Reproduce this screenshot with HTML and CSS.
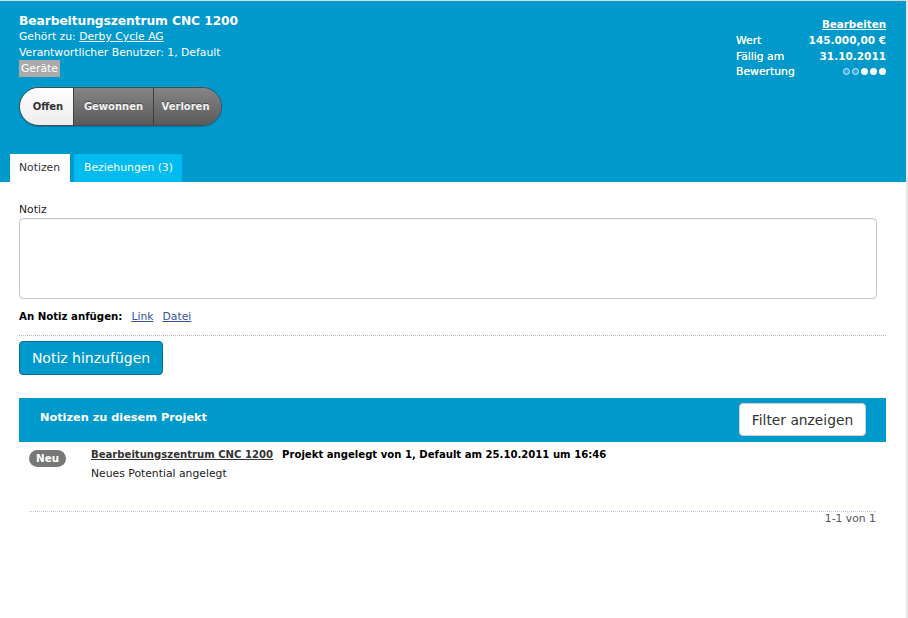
FILE: index.html
```html
<!DOCTYPE html>
<html lang="de">
<head>
<meta charset="utf-8">
<title>Bearbeitungszentrum CNC 1200</title>
<link rel="stylesheet" href="styles.css">
</head>
<body>
<div class="page">
  <header class="head">
    <div class="head-top">
      <div class="head-left">
        <h1 class="title">Bearbeitungszentrum CNC 1200</h1>
        <div class="line">Gehört zu: <a href="#" class="wlink">Derby Cycle AG</a></div>
        <div class="line">Verantwortlicher Benutzer: 1, Default</div>
        <span class="tag">Geräte</span>
        <div class="seg">
          <span class="seg-item active">Offen</span>
          <span class="seg-item">Gewonnen</span>
          <span class="seg-item">Verloren</span>
        </div>
      </div>
      <div class="head-right">
        <a href="#" class="wlink edit">Bearbeiten</a>
        <div class="kv"><span class="k">Wert</span><span class="v">145.000,00 €</span></div>
        <div class="kv"><span class="k">Fällig am</span><span class="v">31.10.2011</span></div>
        <div class="kv"><span class="k">Bewertung</span>
          <span class="dots"><i class="dot empty"></i><i class="dot empty"></i><i class="dot"></i><i class="dot"></i><i class="dot"></i></span>
        </div>
      </div>
    </div>
    <nav class="tabs">
      <span class="tab active">Notizen</span>
      <span class="tab">Beziehungen (3)</span>
    </nav>
  </header>
  <main class="content">
    <label class="lbl">Notiz</label>
    <div class="textarea"></div>
    <div class="attach"><b>An Notiz anfügen:</b><a href="#">Link</a><a href="#">Datei</a></div>
    <div class="sep"></div>
    <button class="btn-primary">Notiz hinzufügen</button>
    <section class="notes">
      <div class="notes-bar">
        <span class="notes-title">Notizen zu diesem Projekt</span>
        <button class="btn-filter">Filter anzeigen</button>
      </div>
      <div class="note">
        <span class="badge">Neu</span>
        <div class="note-body">
          <div class="note-head"><a href="#">Bearbeitungszentrum CNC 1200</a><b>Projekt angelegt von 1, Default am 25.10.2011 um 16:46</b></div>
          <div class="note-text">Neues Potential angelegt</div>
        </div>
      </div>
      <div class="pager">1-1 von 1</div>
    </section>
  </main>
</div>
</body>
</html>
```
FILE: styles.css
```css
* { box-sizing: border-box; }
html, body { margin: 0; padding: 0; background: #fff; }
body {
  font-family: "DejaVu Sans", Verdana, sans-serif;
  font-size: 10.8px;
  color: #222;
}
.page {
  width: 908px;
  min-height: 618px;
  border-top: 1px solid #dcdcdc;
  border-right: 2px solid #e6e6e6;
}
.head {
  background: #0099cc;
  color: #fff;
  height: 181px;
  display: flex;
  flex-direction: column;
  justify-content: space-between;
}
.head-top {
  display: flex;
  justify-content: space-between;
  padding: 13px 20px 0 19px;
}
.title {
  margin: 0;
  font-size: 12.3px;
  font-weight: bold;
  line-height: 15px;
  letter-spacing: -0.1px;
}
.line {
  font-size: 10.8px;
  line-height: 16px;
}
.wlink { color: #fff; }
.tag {
  display: inline-block;
  background: #aaaaaa;
  color: #fff;
  font-size: 10.8px;
  line-height: 17px;
  padding: 0 2px 0 2px;
  margin-top: -1px;
  vertical-align: top;
}
.seg {
  display: flex;
  width: 203px;
  height: 39px;
  margin-top: 10px;
  border-radius: 20px;
  overflow: hidden;
  border: 1px solid #4a4a4a;
  box-shadow: 0 1px 1px rgba(0,0,0,0.2);
}
.seg-item {
  display: flex;
  align-items: center;
  justify-content: center;
  font-size: 10px;
  font-weight: bold;
  color: #f2f2f2;
  background: linear-gradient(#858585, #5a5a5a);
  text-shadow: 0 -1px 0 rgba(0,0,0,0.4);
  border-left: 1px solid #3f3f3f;
}
.seg-item:nth-child(1) { width: 53px; border-left: 0; }
.seg-item:nth-child(2) { width: 80px; }
.seg-item:nth-child(3) { flex: 1; padding-right: 4px; }
.seg-item.active {
  background: linear-gradient(#ffffff, #ececec);
  color: #333;
  text-shadow: none;
  padding-left: 3px;
}
.head-right {
  width: 150px;
  padding-top: 2px;
  display: flex;
  flex-direction: column;
  font-size: 10.8px;
}
.edit {
  align-self: flex-end;
  font-weight: bold;
  font-size: 10.3px;
  line-height: 16px;
  margin-bottom: 1px;
}
.kv {
  display: flex;
  justify-content: space-between;
  align-items: center;
  line-height: 15.5px;
}
.k { font-weight: normal; text-shadow: 0 0 0.4px #fff; }
.v { font-weight: bold; font-size: 10.5px; }
.dots { display: flex; gap: 2px; }
.dot {
  width: 7px; height: 7px;
  border-radius: 50%;
  background: #fff;
  display: block;
}
.dot.empty {
  background: #33aadd;
  border: 1px solid #cfeeff;
}
.tabs {
  display: flex;
  padding-left: 10px;
  gap: 4px;
}
.tab {
  height: 28px;
  line-height: 28px;
  padding: 0 9px 0 10px;
  font-size: 10.8px;
  background: #00bbf0;
  color: #fff;
}
.tab.active {
  background: #fff;
  color: #333;
  width: 60px;
  padding: 0 9px;
}
.content {
  padding: 21px 20px 0 19px;
}
.lbl {
  display: block;
  font-size: 10.8px;
  line-height: 14px;
  margin-bottom: 1px;
  color: #222;
}
.textarea {
  width: 858px;
  height: 81px;
  border: 1px solid #c8c8c8;
  border-radius: 4px;
  box-shadow: inset 0 1px 1px rgba(0,0,0,0.05);
}
.attach {
  margin-top: 11px;
  font-size: 10.8px;
  line-height: 14px;
  display: flex;
  gap: 9px;
  color: #000;
}
.attach b { font-size: 10.2px; }
.attach a { color: #335599; }
.sep {
  margin-top: 11px;
  border-top: 1px dotted #b8b8b8;
}
.btn-primary {
  display: block;
  margin-top: 5px;
  width: 144px;
  height: 34px;
  background: #0099cc;
  border: 1px solid #0a6f94;
  border-radius: 4px;
  color: #fff;
  font-family: "DejaVu Sans", Verdana, sans-serif;
  font-size: 14px;
  padding: 0;
}
.notes { margin-top: 23px; }
.notes-bar {
  background: #0099cc;
  height: 44px;
  display: flex;
  align-items: flex-start;
  justify-content: space-between;
  padding: 5px 20px 0 21px;
}
.notes-title {
  color: #fff;
  font-weight: bold;
  font-size: 11.3px;
  line-height: 14px;
  margin-top: 8px;
}
.btn-filter {
  background: #fff;
  border: 1px solid #d0d0d0;
  border-radius: 4px;
  width: 127px;
  height: 33px;
  font-family: "DejaVu Sans", Verdana, sans-serif;
  font-size: 13.8px;
  color: #333;
  padding: 0;
}
.note {
  display: flex;
  padding: 8px 0 0 10px;
  gap: 25px;
  height: 69px;
}
.badge {
  background: #777;
  color: #fff;
  font-weight: bold;
  font-size: 10.3px;
  height: 17px;
  line-height: 17px;
  width: 37px;
  text-align: center;
  border-radius: 9px;
  flex: none;
}
.note-body { margin-top: -1px; }
.note-head {
  font-size: 10.1px;
  line-height: 12px;
  display: flex;
  gap: 9px;
  color: #000;
}
.note-head a { color: #333; font-weight: bold; }
.note-text {
  margin-top: 6px;
  font-size: 10.8px;
  line-height: 14px;
  color: #222;
}
.pager {
  margin-left: 10px;
  margin-right: 10px;
  border-top: 1px dotted #b8c8d8;
  text-align: right;
  font-size: 10.8px;
  color: #555;
  padding-top: 0;
  line-height: 14px;
}
```
